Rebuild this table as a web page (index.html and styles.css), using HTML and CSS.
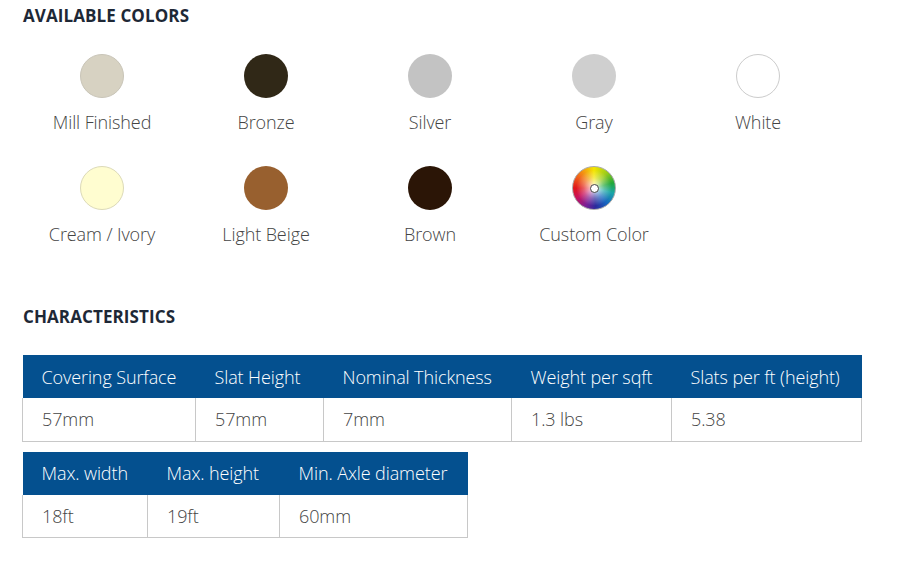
FILE: index.html
```html
<!DOCTYPE html>
<html>
<head>
<meta charset="utf-8">
<link rel="stylesheet" href="styles.css">
</head>
<body>
<div class="page">
  <h2 class="title">AVAILABLE COLORS</h2>
  <div class="swatches">
    <div class="swatch"><span class="dot mill"></span><span class="name">Mill Finished</span></div>
    <div class="swatch"><span class="dot bronze"></span><span class="name">Bronze</span></div>
    <div class="swatch"><span class="dot silver"></span><span class="name">Silver</span></div>
    <div class="swatch"><span class="dot gray"></span><span class="name">Gray</span></div>
    <div class="swatch"><span class="dot white"></span><span class="name">White</span></div>
    <div class="swatch"><span class="dot cream"></span><span class="name">Cream / Ivory</span></div>
    <div class="swatch"><span class="dot beige"></span><span class="name">Light Beige</span></div>
    <div class="swatch"><span class="dot brown"></span><span class="name">Brown</span></div>
    <div class="swatch"><span class="dot wheel"><span class="hole"></span></span><span class="name">Custom Color</span></div>
  </div>

  <h2 class="title chars">CHARACTERISTICS</h2>
  <table class="spec spec1">
    <thead>
      <tr><th class="c1">Covering Surface</th><th class="c2">Slat Height</th><th class="c3">Nominal Thickness</th><th class="c4">Weight per sqft</th><th class="c5">Slats per ft (height)</th></tr>
    </thead>
    <tbody>
      <tr><td>57mm</td><td>57mm</td><td>7mm</td><td>1.3 lbs</td><td>5.38</td></tr>
    </tbody>
  </table>
  <table class="spec spec2">
    <thead>
      <tr><th class="d1">Max. width</th><th class="d2">Max. height</th><th class="d3">Min. Axle diameter</th></tr>
    </thead>
    <tbody>
      <tr><td>18ft</td><td>19ft</td><td>60mm</td></tr>
    </tbody>
  </table>
</div>
</body>
</html>
```
FILE: styles.css
```css
html, body {
  margin: 0;
  padding: 0;
  background: #ffffff;
}
body {
  font-family: "Open Sans", "Liberation Sans", sans-serif;
  color: #444444;
}
.page {
  padding: 6px 0 0 22px;
}
.title {
  margin: 0;
  padding-left: 1px;
  font-size: 17px;
  font-weight: 700;
  color: #1e2836;
  line-height: 20px;
  letter-spacing: 0.1px;
}
.swatches {
  display: grid;
  grid-template-columns: repeat(5, 164px);
  row-gap: 32px;
  margin: 28px 0 0 -2px;
}
.swatch {
  display: flex;
  flex-direction: column;
  align-items: center;
}
.dot {
  display: block;
  width: 44px;
  height: 44px;
  border-radius: 50%;
  box-sizing: border-box;
  position: relative;
}
.name {
  margin-top: 12px;
  font-size: 18px;
  font-weight: 300;
  line-height: 24px;
  color: #444444;
  letter-spacing: -0.1px;
}
.mill { background: #d7d2c2; border: 1px solid #c9c5b8; }
.bronze { background: #302817; }
.silver { background: #c3c3c3; }
.gray { background: #cfcfcf; }
.white { background: #ffffff; border: 1px solid #cccccc; }
.cream { background: #fffdd0; border: 1px solid #dcdab8; }
.beige { background: #98602f; }
.brown { background: #2b1506; }
.wheel {
  background:
    radial-gradient(circle, rgba(255,255,255,0.9) 0, rgba(255,255,255,0.3) 35%, rgba(255,255,255,0) 60%),
    conic-gradient(#f4e600 0deg, #9ccc1a 40deg, #22a83a 75deg, #1aa6a8 105deg, #1866c0 140deg, #2b2a9c 175deg, #7a1f96 205deg, #c8125e 240deg, #e0161a 270deg, #f2701a 310deg, #f4e600 360deg);
  border: 1px solid #aaaaaa;
}
.hole {
  position: absolute;
  left: 50%;
  top: 50%;
  width: 7px;
  height: 7px;
  margin: -4.5px 0 0 -4.5px;
  border: 1px solid #444;
  border-radius: 50%;
  background: #fff;
}
.chars {
  margin-top: 61px;
}
.spec {
  border-collapse: collapse;
  font-size: 18px;
  font-weight: 300;
  letter-spacing: -0.1px;
}
.spec1 { margin-top: 28px; }
.spec2 { margin-top: 10px; }
.spec th {
  background: #04508f;
  color: #ffffff;
  font-weight: 300;
  text-align: left;
  height: 43px;
  padding: 0 0 0 19px;
  box-sizing: border-box;
  border: 0;
  white-space: nowrap;
}
.spec td {
  height: 43px;
  padding: 0 0 0 19px;
  box-sizing: border-box;
  border: 1px solid #c8c8c8;
  border-top: 0;
  color: #444444;
}
.c1 { width: 173px; }
.c2 { width: 128px; }
.c3 { width: 188px; }
.c4 { width: 160px; }
.c5 { width: 190px; }
.d1 { width: 125px; }
.d2 { width: 132px; }
.d3 { width: 188px; }
```
